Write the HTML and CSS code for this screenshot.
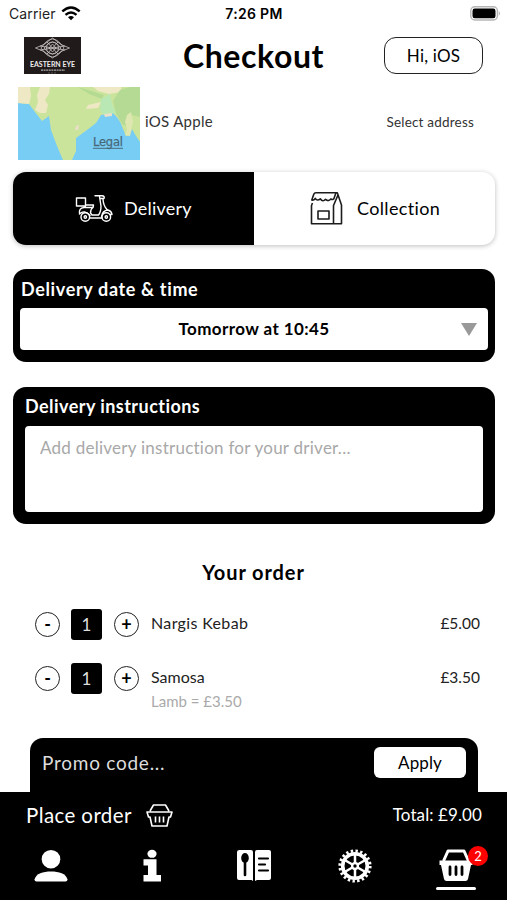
FILE: index.html
```html
<!DOCTYPE html>
<html lang="en">
<head>
<meta charset="utf-8">
<title>Checkout</title>
<link rel="stylesheet" href="styles.css">
</head>
<body>
<div class="app">
  <div class="status">
    <div class="carrier"><span class="carrier-name">Carrier</span>
      <svg width="20" height="15" viewBox="0 0 20 15" fill="none" stroke="#000" stroke-width="2.4"><path d="M1.3 5.4Q10 -2.4 18.7 5.4M4.5 8.9Q10 4 15.5 8.9"/><path d="M7 11.3Q10 8.8 13 11.3L10 14.2Z" fill="#000" stroke="none"/></svg>
    </div>
    <span class="clock">7:26 PM</span>
    <svg class="battery" width="31" height="15" viewBox="0 0 31 15"><rect x=".8" y=".8" width="26.6" height="13.2" rx="4" fill="#fff" stroke="#b5b5b5" stroke-width="1.4"/><rect x="2.5" y="2.6" width="23" height="9.6" rx="2.3"/><path d="M28.8 5Q31 7.4 28.8 9.8Z" fill="#aaa"/></svg>
  </div>

  <header class="header">
    <svg class="logo" width="57" height="37" viewBox="0 0 57 37">
      <rect width="57" height="37" fill="#211a1a"/>
      <g fill="none" stroke="#c9c5c5" stroke-width=".8"><path d="M11.5 11Q20 9 28.5 1Q37 9 45.5 11Q37 13 28.5 21Q20 13 11.5 11Z"/><path d="M17 11Q23 2 28.5 2Q34 2 40 11Q34 20 28.5 20Q23 20 17 11ZM20 11Q28.5-1 37 11Q28.5 23 20 11ZM16 9L41 13M16 13L41 9M23 5L34 17M34 5L23 17M25 11L28.5 7L32 11L28.5 15Z"/><circle cx="28.5" cy="11" r="6"/></g>
      <text x="28.5" y="30.3" class="logo-name" textLength="45" lengthAdjust="spacingAndGlyphs">EASTERN EYE</text>
      <path d="M17 33.2H41" stroke="#aaa" stroke-width="1.2" stroke-dasharray="2 .6"/><path d="M24 36H33" stroke="#665f5f" stroke-width=".8" stroke-dasharray="2 1"/>
    </svg>
    <h1 class="title">Checkout</h1>
    <button class="account">Hi, iOS</button>
  </header>

  <section class="address">
    <svg class="map" width="122" height="73" viewBox="0 0 122 73">
      <rect width="122" height="73" fill="#78cdf5"/>
      <path d="M0 0H122V55Q117 48 114 42Q112 50 108 49L105 42Q102 32 95 26L83 28L78 36L69 43L58 51V64L54 73H45L39 59L33 43L31 29L24 34L17 25L11 17L0 16Z" fill="#cbe49c"/>
      <path d="M0 0H12L13 9L11 17L0 16ZM22 0H32L31 7L27 13L30 18L28 26H22L17 23L20 15L19 8ZM75 0H103V5L91 7L80 4ZM70 18L83 15L80 21L68 22Z" fill="#eee8c4"/>
      <path d="M60 0L70 3L86 8L84 12L71 7Z" fill="#b5da92"/>
      <path d="M83 12L92 7L94 17L98 26L86 28L82 23Z" fill="#b9e8b4"/>
      <path d="M102 3L112 0H122V30L114 28L110 40L104 37L98 26L95 14Z" fill="#b4da93"/>
      <path d="M109 28L113 25L115 35L112 49L107 48L109 42L107 35Z" fill="#dfe7b1"/>
      <path d="M58 39L61 38L60 43H57ZM86 27L94 26V29L87 30Z" fill="#eadfc9"/>
      <text x="75" y="59" class="map-legal" textLength="30">Legal</text><path d="M75 61.3H105" stroke="#47697a" stroke-width="1"/>
    </svg>
    <span class="customer">iOS Apple</span>
    <span class="select">Select address</span>
  </section>

  <div class="modes">
    <div class="mode mode-on">
      <svg class="scooter" width="38" height="29" viewBox="0 0 38 29" fill="none" stroke="#fff" stroke-width="1.4" stroke-linejoin="round" stroke-linecap="round"><path d="M1.5 4H10.500V12H1.500ZM10.500 11H18.500L18 13.500Q15.500 15 15.500 19L17 21H23.500Q26 18 26 12L24.500 2.500M20 1.800H27Q30 1.800 29 4.500H25M28 5.500Q28.500 12 32 15.500M4.500 20Q3.500 14 9 13.500H17.500M4.500 20Q9.500 15 15 21.500M26.500 22.500Q27.500 16.500 33 16Q36.500 17 37 20.500H35M15 24H27"/><circle cx="10.300" cy="23" r="4.300"/><circle cx="31.300" cy="23" r="4.300"/><circle cx="10.300" cy="23" r="1.200"/><circle cx="31.300" cy="23" r="1.200"/></svg>
      <span>Delivery</span>
    </div>
    <div class="mode">
      <svg class="bag" width="33" height="35" viewBox="0 0 33 35" fill="none" stroke="#1c1c1c" stroke-width="1.600" stroke-linejoin="round"><path d="M2.500 12L1.500 14.500V32.800H31.500V14L27.300 1.800H6Q4.300 1.800 3.800 3.300L1.800 9Q4.500 9.500 5.300 7.300Q7.300 10.500 10.300 7.800Q12.800 11.500 15.500 8.300Q18.500 11 20.800 8Q23.800 9.500 24.300 6.500L26 1.800M28 4L23.500 14.500V32.800M8 20H19V28H8Z"/></svg>
      <span>Collection</span>
    </div>
  </div>

  <section class="panel panel-date">
    <h2>Delivery date &amp; time</h2>
    <div class="picker"><span>Tomorrow at 10:45</span><i class="caret"></i></div>
  </section>

  <section class="panel panel-notes">
    <h2>Delivery instructions</h2>
    <div class="notes">Add delivery instruction for your driver...</div>
  </section>

  <h2 class="order-title">Your order</h2>
  <div class="item">
    <button class="step">-</button><span class="qty">1</span><button class="step">+</button>
    <span class="name name-first">Nargis Kebab</span><span class="price">£5.00</span>
  </div>
  <div class="item">
    <button class="step">-</button><span class="qty">1</span><button class="step">+</button>
    <span class="name">Samosa</span><span class="price">£3.50</span>
  </div>
  <div class="option">Lamb = £3.50</div>

  <div class="promo"><span>Promo code...</span><button class="apply">Apply</button></div>
  <footer class="footer">
    <div class="place">
      <span class="place-label">Place order</span>
      <svg class="place-icon" width="27" height="23" viewBox="0 0 27 23" fill="none" stroke="#fff" stroke-width="1.600" stroke-linejoin="round"><path d="M4 7L7.500 1H19.500L23 7M1 8H26L24.500 13H23L21 22H6L4 13H2.500ZM9.500 12.500V18.500M13.500 12.500V18.500M17.500 12.500V18.500"/></svg>
      <span class="total">Total: £9.00</span>
    </div>
    <nav class="tabs">
      <div class="tab"><svg width="34" height="34" viewBox="0 0 34 34" fill="#fff"><circle cx="17" cy="10.200" r="9.300"/><path d="M.5 30.500C2 24.500 9 22.500 17 22.500S32 24.500 33.500 30.500Q33.500 32.500 31.500 32.500H2.500Q.5 32.500 .5 30.500Z"/></svg></div>
      <div class="tab"><svg width="34" height="34" viewBox="0 0 34 34" fill="#fff"><ellipse cx="17" cy="4.800" rx="4.600" ry="4"/><path d="M8.500 10.200H21.500V26H26V32.500H8.500V26H13V16.500H8.500Z"/></svg></div>
      <div class="tab"><svg width="34" height="34" viewBox="0 0 34 34"><path d="M2.500 1H14Q16 1 16 3V32L14.500 31H2Q0 31 0 29V3Q0 1 2.500 1ZM20 1H32Q34 1 34 3V29Q34 31 32 31H20L18 32V3Q18 1 20 1Z" fill="#fff"/><ellipse cx="8" cy="9" rx="3.800" ry="5"/><path d="M8 12V26" stroke="#000" stroke-width="2.600" stroke-linecap="round"/><path d="M22 9.500H31M22 15.500H28M22 21.500H31" stroke="#000" stroke-width="2.200" stroke-linecap="round"/></svg></div>
      <div class="tab"><svg width="34" height="34" viewBox="0 0 34 34" fill="none" stroke="#fff"><circle cx="17" cy="17" r="12.300" stroke-width="3.600"/><circle cx="17" cy="17" r="15.100" stroke-width="3" stroke-dasharray="2.400 2.344"/><circle cx="17" cy="17" r="2.900" stroke-width="2.400"/><path d="M17 5V14M17 20V29M6.600 11L14.400 15.500M19.600 18.500L27.400 23M6.600 23L14.400 18.500M19.600 15.500L27.400 11" stroke-width="2.500"/></svg></div>
      <div class="tab tab-on"><svg width="34" height="34" viewBox="0 0 34 34"><path d="M4.500 12L9 2H25L29.500 12" fill="none" stroke="#fff" stroke-width="3" stroke-linejoin="round"/><path d="M.5 11.500H33.500V16H32L29 30Q28.500 32 26.500 32H7.500Q5.500 32 5 30L2 16H.5Z" fill="#fff"/><path d="M11 18V25.500M17 18V25.500M23 18V25.500" stroke="#000" stroke-width="2.800" stroke-linecap="round"/></svg><span class="badge">2</span></div>
    </nav>
  </footer>
</div>
</body>
</html>
```

FILE: styles.css
```css
* { box-sizing: border-box; }
body { margin: 0; background: #fff; color: #000; font-family: Lato, "Liberation Sans", sans-serif; }
button { font: inherit; color: inherit; padding: 0; }
h1, h2 { margin: 0; }
svg { display: block; flex: none; }
.app { width: 507px; height: 900px; display: flex; flex-direction: column; overflow: hidden; white-space: nowrap; }

.status { height: 27px; flex: none; display: grid; grid-template-columns: 1fr auto 1fr; align-items: center; padding: 0 6px 0 9px; font-family: Inter, sans-serif; font-size: 14px; }
.carrier { display: flex; gap: 5px; align-items: center; }
.carrier-name { color: #222; letter-spacing: .1px; }
.clock { font-weight: 600; font-size: 14px; letter-spacing: .3px; margin-left: -2px; }
.battery { justify-self: end; }

.header { height: 59px; flex: none; display: grid; grid-template-columns: 160px 1fr 160px; align-items: center; padding-bottom: 2px; }
.logo { margin-left: 24px; }
.logo-name { font: 700 8px Lato, sans-serif; fill: #eee; text-anchor: middle; }
.title { text-align: center; font-size: 32px; line-height: 40px; font-weight: 700; letter-spacing: .6px; }
.account { width: 99px; height: 37px; margin-left: 37px; border: 1.500px solid #222; border-radius: 12px; background: #fff; font-size: 17px; letter-spacing: .2px; }

.address { height: 74px; flex: none; display: flex; align-items: center; padding: 0 33px 0 18px; color: #333; }
.map-legal { font: 11.500px "DejaVu Sans", sans-serif; fill: #47697a; stroke: #47697a; stroke-width: .25px; }
.customer { font-size: 15px; margin: -4px 0 0 5px; letter-spacing: .3px; }
.select { margin-left: auto; font-size: 13.500px; letter-spacing: .2px; margin-top: -2px; }

.modes { height: 73px; flex: none; margin: 12px 12px 0 13px; display: grid; grid-template-columns: 1fr 1fr; border-radius: 13px; box-shadow: 0 1px 5px rgba(0,0,0,.26); }
.mode { display: flex; align-items: center; font-size: 18px; letter-spacing: .35px; padding-left: 56px; border-radius: 0 13px 13px 0; }
.mode span { margin-top: -2px; }
.mode-on { background: #000; color: #fff; padding-left: 62px; border-radius: 13px 0 0 13px; letter-spacing: .2px; }
.scooter { margin-right: 11px; }
.bag { margin-right: 14px; }

.panel { flex: none; margin: 24px 12px 0 13px; background: #000; border-radius: 13px; color: #fff; }
.panel h2 { font-size: 18px; line-height: 24px; letter-spacing: .45px; font-weight: 700; }
.panel-date { height: 93px; padding: 8px 7px; }
.panel-date h2 { padding-left: 1px; letter-spacing: .65px; }
.picker { height: 42px; margin-top: 7px; background: #fff; color: #000; border-radius: 4px; display: flex; align-items: center; justify-content: center; position: relative; font-size: 17px; font-weight: 700; letter-spacing: .4px; padding-bottom: 1px; }
.caret { position: absolute; right: 11px; top: 15px; border: 8px solid transparent; border-top: 13px solid #999; border-bottom: 0; }
.panel-notes { height: 137px; margin-top: 25px; padding: 7px 12px; }
.notes { height: 86px; margin-top: 8px; background: #fff; color: #a8a8a8; border-radius: 4px; padding: 10px 15px; font-size: 17px; line-height: 24px; letter-spacing: .25px; }

.order-title { flex: none; text-align: center; margin-top: 34px; font-size: 20px; line-height: 28px; letter-spacing: .9px; }
.item { height: 32px; flex: none; margin: 22px 27px 0 35px; display: flex; align-items: center; color: #222; font-size: 16px; }
.order-title + .item { margin-top: 22px; }
.step { width: 25px; height: 25px; flex: none; border: 1.500px solid #222; border-radius: 50%; background: #fff; color: #000; font-size: 18px; line-height: 18px; font-weight: 700; }
.qty { width: 31px; height: 31px; flex: none; margin: 0 12px 0 11px; background: #000; color: #ddd; border-radius: 3px; text-align: center; line-height: 31px; font-size: 17px; }
.name { margin: -3px 0 0 12px; }
.name-first { letter-spacing: .35px; }
.price { margin: -2px 0 0 auto; font-size: 15.500px; }
.option { flex: none; margin-left: 151px; margin-top: -3px; line-height: 20px; font-size: 15px; color: #aaa; }

.promo { height: 54px; flex: none; margin: auto 29px 0 30px; background: #000; color: #ddd; border-radius: 13px 13px 0 0; padding: 9px 12px 14px; display: flex; align-items: center; justify-content: space-between; font-size: 19px; letter-spacing: .75px; }
.promo span { margin-top: -1px; }
.apply { width: 92px; height: 31px; border: 0; border-radius: 6px; background: #fff; color: #000; font-size: 17px; letter-spacing: .1px; padding-bottom: 1px; }
.footer { height: 108px; flex: none; background: #000; color: #fff; }
.place { height: 48px; padding: 0 25px 0 26px; display: flex; align-items: center; gap: 14px; }
.place-label { font-size: 20.500px; letter-spacing: .4px; margin-top: -2px; }
.place-icon { margin-top: -2px; }
.total { margin-left: auto; font-size: 17px; letter-spacing: .1px; margin-top: -3px; }
.tabs { display: grid; grid-template-columns: repeat(5, 101.250px); height: 60px; padding-top: 9px; }
.tab { display: flex; justify-content: center; align-items: flex-start; position: relative; padding-left: 1px; }
.tab-on::after { content: ""; position: absolute; left: 31px; top: 38px; width: 40px; height: 3px; border-radius: 2px; background: #fff; }
.badge { position: absolute; left: 63px; top: -3px; width: 20px; height: 20px; border-radius: 50%; background: #f00; color: #fff; font-size: 13px; line-height: 20px; text-align: center; }
```
